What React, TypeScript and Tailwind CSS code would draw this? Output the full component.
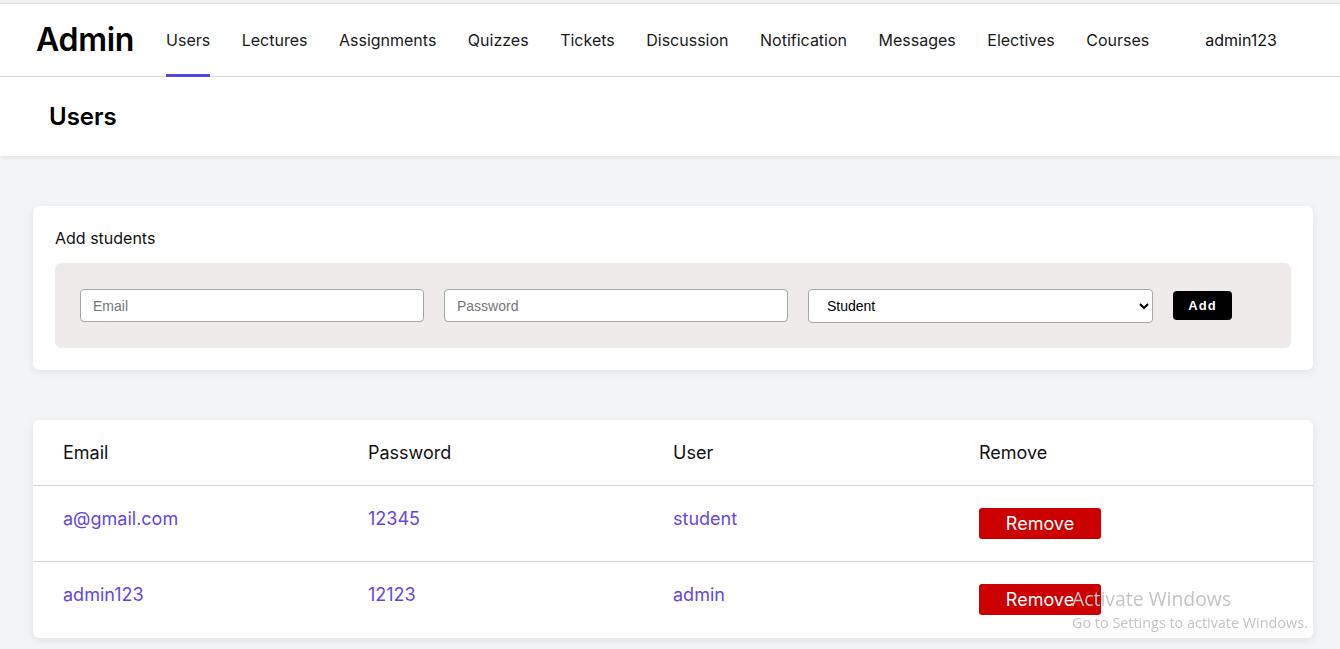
import React, { useState } from 'react';

const navItems = [
  'Users',
  'Lectures',
  'Assignments',
  'Quizzes',
  'Tickets',
  'Discussion',
  'Notification',
  'Messages',
  'Electives',
  'Courses',
];

type UserRow = { email: string; password: string; role: string };

const initialUsers: UserRow[] = [
  { email: 'a@gmail.com', password: '12345', role: 'student' },
  { email: 'admin123', password: '12123', role: 'admin' },
];

export default function App() {
  const [users, setUsers] = useState<UserRow[]>(initialUsers);
  const [email, setEmail] = useState('');
  const [password, setPassword] = useState('');
  const [role, setRole] = useState('student');

  const addUser = () => {
    if (!email || !password) return;
    setUsers([...users, { email, password, role }]);
    setEmail('');
    setPassword('');
  };

  return (
    <div className="min-h-screen bg-[#f3f4f6] font-['Inter',sans-serif] text-[#111]">
      <div className="h-[4px] bg-[#f0f0f0] border-b border-[#dadada]" />

      {/* top nav */}
      <header className="h-[73px] bg-white border-b border-[#dcdcdc] flex items-stretch pl-[36px]">
        <div className="flex items-center text-[32px] font-semibold tracking-[-0.3px] text-black mr-[32px]">
          Admin
        </div>
        <nav className="flex items-stretch gap-[31.5px]">
          {navItems.map((item, i) => (
            <a
              key={item}
              className={
                'relative flex items-center text-[16px] cursor-pointer ' +
                (i === 0 ? 'text-[#222]' : 'text-[#1a1a1a]')
              }
            >
              <span className={i === 0 ? '-mt-[1px]' : ''}>{item}</span>
              {i === 0 && (
                <span className="absolute left-0 right-0 -bottom-[1px] h-[3px] bg-[#4f46e5]" />
              )}
            </a>
          ))}
        </nav>
        <div className="flex items-center text-[16px] ml-[56px]">admin123</div>
      </header>

      {/* page title */}
      <div className="h-[79px] bg-white flex items-center pl-[49px] shadow-[0_2px_4px_rgba(0,0,0,0.07)]">
        <h1 className="text-[24px] font-semibold text-black">Users</h1>
      </div>

      <main className="pt-[50px] pb-[12px] pl-[33px]">
        {/* add students */}
        <section className="w-[1280px] bg-white rounded-[6px] shadow-[0_2px_8px_rgba(0,0,0,0.08)] pt-[20px] pb-[22px] px-[22px]">
          <h2 className="text-[16px] leading-[24px] mb-[13px]">Add students</h2>
          <div className="h-[85px] bg-[#efebea] rounded-[6px] pl-[25px] flex items-center gap-[20px] font-['Liberation_Sans',Arial,sans-serif] text-[14px]">
            <input
              value={email}
              onChange={(e) => setEmail(e.target.value)}
              placeholder="Email"
              className="w-[344px] h-[33px] bg-white border border-[#a6a6a6] rounded-[4px] px-[12px] outline-none placeholder:text-[#777]"
            />
            <input
              value={password}
              onChange={(e) => setPassword(e.target.value)}
              placeholder="Password"
              className="w-[344px] h-[33px] bg-white border border-[#a6a6a6] rounded-[4px] px-[12px] outline-none placeholder:text-[#777]"
            />
            <select
              value={role}
              onChange={(e) => setRole(e.target.value)}
              className="w-[345px] h-[34px] bg-white border border-[#a6a6a6] rounded-[4px] pl-[14px] pr-[6px] text-black outline-none"
            >
              <option value="student">Student</option>
              <option value="admin">Admin</option>
            </select>
            <button
              onClick={addUser}
              className="w-[59px] h-[29px] bg-black text-white rounded-[4px] text-[13px] font-bold tracking-[1px]"
            >
              Add
            </button>
          </div>
        </section>

        {/* users table */}
        <section className="mt-[50px] w-[1280px] bg-white rounded-[6px] shadow-[0_2px_8px_rgba(0,0,0,0.08)]">
          <div className="grid grid-cols-4 px-[30px] h-[66px] items-center text-[18px] text-[#111] border-b border-[#d4d4d4]">
            <div>Email</div>
            <div>Password</div>
            <div>User</div>
            <div className="pl-[1px]">Remove</div>
          </div>
          {users.map((u, i) => (
            <div
              key={u.email + i}
              className={
                'grid grid-cols-4 px-[30px] h-[76px] pt-[19px] items-start text-[18px] leading-[28px] text-[#6547e0] ' +
                (i < users.length - 1 ? 'border-b border-[#d4d4d4]' : '')
              }
            >
              <div>{u.email}</div>
              <div>{u.password}</div>
              <div>{u.role}</div>
              <div className="pl-[1px]">
                <button
                  onClick={() => setUsers(users.filter((_, j) => j !== i))}
                  className="mt-[3px] w-[122px] h-[31px] bg-[#cc0000] text-white rounded-[3px] text-[18px] leading-[31px]"
                >
                  Remove
                </button>
              </div>
            </div>
          ))}
        </section>
      </main>

      {/* OS watermark overlay */}
      <div className="fixed left-[1072px] top-[586px] pointer-events-none font-['Open_Sans',sans-serif] text-[#c4c4c4]">
        <div className="text-[19.4px] leading-[26px]">Activate Windows</div>
        <div className="text-[14.4px] leading-[20px] mt-[1px]">Go to Settings to activate Windows.</div>
      </div>
    </div>
  );
}
